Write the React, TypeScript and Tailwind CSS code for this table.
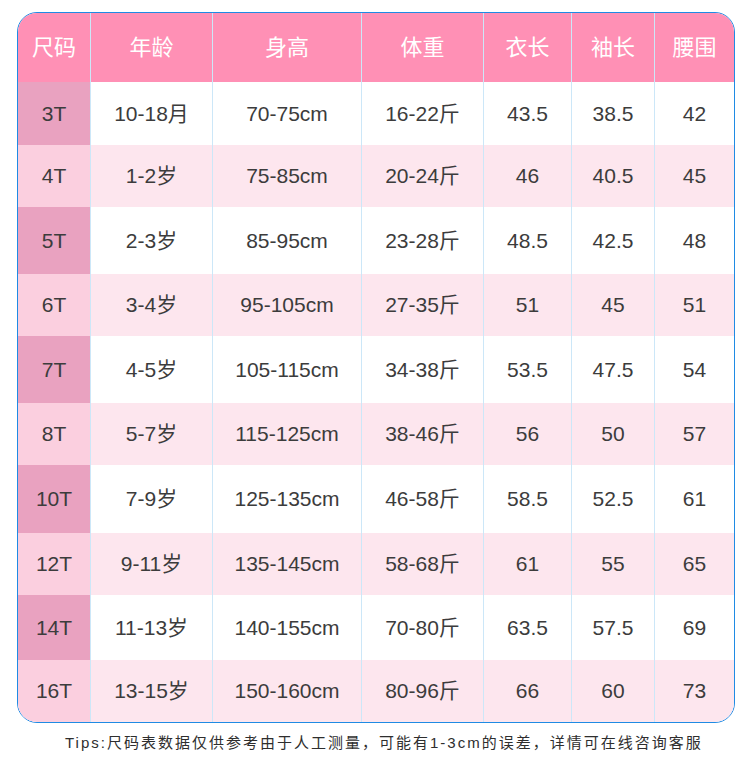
const headers = ["尺码", "年龄", "身高", "体重", "衣长", "袖长", "腰围"];

const rows = [
  ["3T", "10-18月", "70-75cm", "16-22斤", "43.5", "38.5", "42"],
  ["4T", "1-2岁", "75-85cm", "20-24斤", "46", "40.5", "45"],
  ["5T", "2-3岁", "85-95cm", "23-28斤", "48.5", "42.5", "48"],
  ["6T", "3-4岁", "95-105cm", "27-35斤", "51", "45", "51"],
  ["7T", "4-5岁", "105-115cm", "34-38斤", "53.5", "47.5", "54"],
  ["8T", "5-7岁", "115-125cm", "38-46斤", "56", "50", "57"],
  ["10T", "7-9岁", "125-135cm", "46-58斤", "58.5", "52.5", "61"],
  ["12T", "9-11岁", "135-145cm", "58-68斤", "61", "55", "65"],
  ["14T", "11-13岁", "140-155cm", "70-80斤", "63.5", "57.5", "69"],
  ["16T", "13-15岁", "150-160cm", "80-96斤", "66", "60", "73"],
];

// row heights as measured off the original image
const heights = [
  "h-[63px]", "h-[62px]", "h-[67px]", "h-[62px]", "h-[67px]",
  "h-[62px]", "h-[68px]", "h-[62px]", "h-[65px]", "h-[62px]",
];

const widths = ["w-[73px]", "w-[122px]", "w-[149px]", "w-[122px]", "w-[88px]", "w-[83px]", "w-[79px]"];

const font = { fontFamily: '"Liberation Sans", "Noto Sans CJK SC", sans-serif' };

function SizeRow({ cells, index }: { cells: string[]; index: number }) {
  const even = index % 2 === 1;
  return (
    <div className={`flex ${heights[index]} ${even ? "bg-[#fde6ee]" : "bg-white"}`}>
      {cells.map((c, i) => (
        <div
          key={i}
          className={`${widths[i]} shrink-0 flex items-center justify-center text-[21px] text-[#3c3c3c] ${
            i < 6 ? "border-r border-[#cce7f8]" : ""
          } ${i === 0 ? (even ? "bg-[#fbcfdf]" : "bg-[#e9a2c0]") : ""}`}
        >
          {c}
        </div>
      ))}
    </div>
  );
}

export default function App() {
  return (
    <div className="w-[750px] h-[778px] bg-white pt-3 pl-[17px]" style={font}>
      <div className="w-[718px] rounded-[20px] border border-[#1f8be4] overflow-hidden">
        <div className="flex h-[69px] bg-[#ff90b5]">
          {headers.map((h, i) => (
            <div
              key={h}
              className={`${widths[i]} shrink-0 flex items-center justify-center text-[22px] text-white ${
                i < 6 ? "border-r border-[#cce7f8]" : ""
              }`}
            >
              {h}
            </div>
          ))}
        </div>
        {rows.map((r, i) => (
          <SizeRow key={r[0]} cells={r} index={i} />
        ))}
      </div>
      <p className="mt-[12px] pl-[48px] text-[15px] tracking-[2px] text-[#2e2e2e] leading-none">
        Tips:尺码表数据仅供参考由于人工测量，可能有1-3cm的误差，详情可在线咨询客服
      </p>
    </div>
  );
}
